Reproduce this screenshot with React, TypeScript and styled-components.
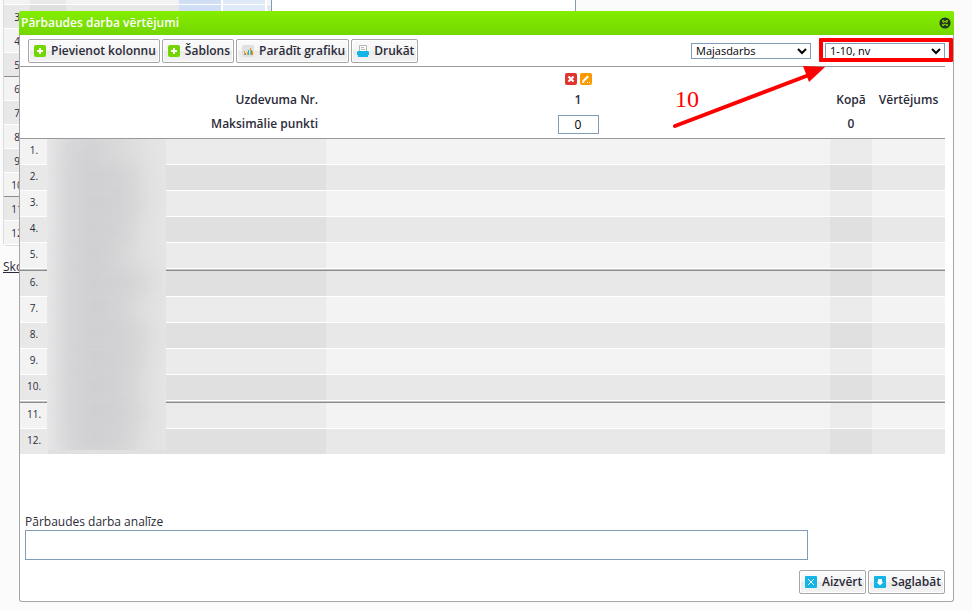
import React from "react";
import styled, { createGlobalStyle, css } from "styled-components";

const GlobalStyle = createGlobalStyle`
  *, *::before, *::after { box-sizing: border-box; }
  body {
    margin: 0;
    background: #fbfbfb;
    color: #2b2b3a;
    font: 12px/16px "Trebuchet MS", "Open Sans", "Noto Sans", sans-serif;
  }
  button, input, select, textarea { font: inherit; color: inherit; }
`;

const Page = styled.div`
  position: relative;
  min-height: 100vh;
  overflow: hidden;
`;

/* Journal page behind the dialog */

const Journal = styled.div`
  display: flex;
  align-items: flex-start;
`;

const JournalTable = styled.table`
  width: 269px;
  margin-left: 3px;
  table-layout: fixed;
  border-collapse: separate;
  border-spacing: 0;
  border: 1px solid #dcdcdc;
  border-top: 0;
  border-radius: 0 0 4px 4px;
`;

const JournalRow = styled.tr<{ $dark: boolean; $ruled: boolean }>`
  background: ${(p) => (p.$dark ? "#e8e8e8" : "#f3f3f3")};
  td {
    height: 24px;
    border-bottom: 1px solid ${(p) => (p.$ruled ? "#8c8c8c" : "#ffffff")};
  }
`;

const JournalCell = styled.td<{ $tone?: string }>`
  padding: 0;
  font-size: 10px;
  text-align: center;
  background: ${(p) => p.$tone ?? "transparent"};
`;

const BlueCell = styled(JournalCell)`
  border-right: 2px solid #ffffff;
`;

const TopRow = styled(JournalRow)`
  td { height: 5px; }
`;

const JournalPane = styled.div`
  flex: 0 0 305px;
  height: 240px;
  margin-left: -1px;
  background: #ffffff;
  border: solid #7f9db9;
  border-width: 0 1px;
`;

const JournalLink = styled.a`
  display: inline-block;
  margin: 13px 0 0 3px;
  color: #2b2b3a;
`;

/* Dialog */

const Dialog = styled.section`
  position: absolute;
  top: 11px;
  left: 19px;
  right: 18px;
  background: #ffffff;
  border: solid #a6a6a6;
  border-width: 0 1px 1px;
  border-radius: 3px;
`;

const TitleBar = styled.header`
  display: flex;
  align-items: center;
  justify-content: space-between;
  height: 24px;
  margin: 0 -1px;
  padding: 0 3px 0 2px;
  background: linear-gradient(#84ee00, #74d600);
  border-radius: 2px 2px 0 0;
`;

const Title = styled.h1`
  margin: 0;
  color: #ffffff;
  font-size: 12px;
  font-weight: 600;
`;

const CloseButton = styled.button`
  display: flex;
  padding: 0;
  border: 0;
  background: none;
`;

const Content = styled.div`
  margin-right: 8px;
`;

const Toolbar = styled.div`
  display: flex;
  align-items: center;
  gap: 2px;
  height: 32px;
  padding-left: 8px;
  border-bottom: 1px solid #999999;
`;

const Button = styled.button`
  display: flex;
  align-items: center;
  gap: 5px;
  height: 24px;
  padding: 0 3px 0 5px;
  border: 1px solid #a6a6a6;
  border-radius: 2px;
  background: linear-gradient(#fafafa 0, #f6f6f6 48%, #e9e9e9 50%, #f4f4f4 100%);
  box-shadow: inset 0 0 0 1px #ffffff;
  font-weight: 600;
  white-space: nowrap;
`;

const Filters = styled.div`
  display: flex;
  gap: 14px;
  margin-left: auto;
`;

const SelectBox = styled.div`
  position: relative;
  display: flex;
  width: 120px;
  svg {
    position: absolute;
    top: 5px;
    right: 4px;
    pointer-events: none;
  }
`;

const Select = styled.select`
  appearance: none;
  width: 100%;
  height: 16px;
  padding: 0 4px;
  border: 1px solid #7f9db9;
  border-radius: 0;
  background: #ffffff;
  color: #000000;
  font-size: 11px;
  line-height: 14px;
`;

const Highlight = styled.div`
  position: absolute;
  top: -5px;
  left: -6px;
  right: -8px;
  height: 24px;
  border: 4px solid #fe0000;
  border-radius: 1px;
  pointer-events: none;
`;

const Annotation = styled.div`
  position: absolute;
  top: 55px;
  right: 128px;
  width: 154px;
  height: 64px;
  color: #fe0000;
  font: 24px/28px "Liberation Serif", serif;
  pointer-events: none;
  svg { position: absolute; inset: 0; }
  span { position: absolute; top: 19px; left: 4px; }
`;

const Grid = styled.div`
  position: relative;
`;

const Scores = styled.table`
  width: 100%;
  table-layout: fixed;
  border-collapse: separate;
  border-spacing: 0;
  th, td { padding: 0; }
`;

const HeadRow = styled.tr<{ $kind: "actions" | "titles" | "points" }>`
  && > * {
    height: ${(p) => ({ actions: 21, titles: 24, points: 26 })[p.$kind]}px;
    padding-top: ${(p) => (p.$kind === "actions" ? 3 : 0)}px;
    padding-bottom: ${(p) => (p.$kind === "points" ? 2 : 0)}px;
  }
`;

const HeadCell = styled.th<{ $right?: boolean }>`
  font-weight: 600;
  text-align: ${(p) => (p.$right ? "right" : "center")};
  white-space: nowrap;
  && { padding-right: ${(p) => (p.$right ? "8px" : "0")}; }
`;

const ColumnActions = styled.div`
  display: flex;
  justify-content: center;
  gap: 3px;
`;

const IconButton = styled.button`
  display: flex;
  padding: 0;
  border: 0;
  background: none;
`;

const PointsInput = styled.input`
  display: block;
  width: 41px;
  height: 19px;
  margin: 0 auto;
  padding: 0;
  border: 1px solid #7f9db9;
  background: #ffffff;
  color: #000000;
  font-size: 12px;
  font-weight: 400;
  text-align: center;
`;

const Body = styled.tbody`
  tr:first-child td, tr:first-child th { border-top: 1px solid #999999; height: 27px; }
`;

const ScoreRow = styled.tr<{ $dark: boolean; $rule: "none" | "thin" | "group" }>`
  background: ${(p) => (p.$dark ? "#e8e8e8" : "#f3f3f3")};
  td, th {
    height: ${(p) => (p.$rule === "group" ? 28 : p.$rule === "thin" ? 26 : 25)}px;
    border-bottom: ${(p) => (p.$rule === "none" ? "0" : "1px solid #ffffff")};
    ${(p) =>
      p.$rule === "group" &&
      css`
        border-bottom: 1px solid #8c8c8c;
        box-shadow: inset 0 -1px #c4c4c4, inset 0 -2px #ffffff;
      `}
  }
`;

const NumberCell = styled.th`
  font-size: 10px;
  line-height: 14px;
  font-weight: 400;
  text-align: center;
  vertical-align: top;
  && { padding-top: 4px; }
`;

const ShadedCell = styled.td`
  background: rgba(0, 0, 0, 0.03);
`;

const NamesMask = styled.div`
  position: absolute;
  left: 27px;
  bottom: 4px;
  width: 119px;
  height: 311px;
  overflow: hidden;
  background: linear-gradient(90deg, #e8e8e9 0, #dddddf 18%, #d7d7d9 40%, #dbdbdc 62%, #e3e3e3 86%, #e5e5e5 100%);
`;

const Smudge = styled.i<{ $w: number }>`
  display: block;
  width: ${(p) => p.$w}px;
  height: 26px;
  margin-left: 16px;
  background: #c9c9cc;
  opacity: 0.5;
  filter: blur(12px);
`;

const Analysis = styled.div`
  display: flex;
  flex-direction: column;
  margin: 60px 137px 0 5px;
`;

const AnalysisBox = styled.textarea`
  height: 30px;
  padding: 4px;
  border: 1px solid #7f9db9;
  border-radius: 0;
  background: #ffffff;
  resize: none;
`;

const Footer = styled.footer`
  display: flex;
  justify-content: flex-end;
  gap: 2px;
  padding: 10px 0 7px;
`;

/* Icons */

const PlusIcon = () => (
  <svg width="12" height="12" viewBox="0 0 12 12" aria-hidden="true">
    <rect width="12" height="12" rx="2" fill="#74d600" />
    <path d="M5 3h2v2h2v2H7v2H5V7H3V5h2z" fill="#fff" />
  </svg>
);

const ChartIcon = () => (
  <svg width="12" height="12" viewBox="0 0 12 12" aria-hidden="true">
    <rect width="12" height="12" rx="2" fill="#e0e0e0" />
    <path d="M2 6h1v4H2zM5 7h1v3H5zM8 3h1v7H8zM10 6h1v4h-1z" fill="#fb9a00" />
    <path d="M3 8h1v2H3zM6 5h1v5H6zM9 5h1v5H9z" fill="#12b5e5" />
  </svg>
);

const PrinterIcon = () => (
  <svg width="12" height="12" viewBox="0 0 12 12" aria-hidden="true">
    <path d="M2.5 6V.5h7V6" fill="#fff" stroke="#b4b4b4" />
    <path d="M4 2.5h3M4 4.5h4" stroke="#b4b4b4" />
    <path d="M1 6h10l1 1v3h-1v2H1v-2H0V7z" fill="#12b5e5" />
  </svg>
);

const DeleteIcon = () => (
  <svg width="12" height="12" viewBox="0 0 12 12" aria-hidden="true">
    <rect width="12" height="12" rx="2" fill="#e0342f" />
    <path d="M3.5 3.5l5 5M8.5 3.5l-5 5" stroke="#fff" strokeWidth="2.2" />
  </svg>
);

const EditIcon = () => (
  <svg width="12" height="12" viewBox="0 0 12 12" aria-hidden="true">
    <rect width="12" height="12" rx="2" fill="#fb9a00" />
    <path d="M3.2 8.2l5-5" stroke="#fff" strokeWidth="2.2" />
    <path d="M2 10l.5-2.5 2 2zM7 9h1v1H7zM9 9h1v1H9z" fill="#fff" />
  </svg>
);

const CancelIcon = () => (
  <svg width="12" height="12" viewBox="0 0 12 12" aria-hidden="true">
    <rect width="12" height="12" rx="1" fill="#12b5e5" />
    <path d="M3 3l6 6M9 3L3 9" stroke="#fff" />
  </svg>
);

const SaveIcon = () => (
  <svg width="12" height="12" viewBox="0 0 12 12" aria-hidden="true">
    <rect width="12" height="12" rx="1" fill="#12b5e5" />
    <path d="M4 3h4v3h1.5L6 9.5 2.5 6H4z" fill="#fff" />
  </svg>
);

const CloseIcon = () => (
  <svg width="12" height="12" viewBox="0 0 12 12" aria-hidden="true">
    <circle cx="6" cy="6" r="5.6" fill="#24371f" />
    <path d="M4 4l4 4M8 4L4 8" stroke="#84e400" strokeWidth="2" strokeLinecap="round" />
    <path d="M4.5 4.5l3 3M7.5 4.5l-3 3" stroke="#24371f" strokeWidth=".8" />
  </svg>
);

const Chevron = () => (
  <svg width="10" height="7" viewBox="0 0 10 7" aria-hidden="true">
    <path d="M1 1l4 4 4-4" fill="none" stroke="#000" strokeWidth="2" />
  </svg>
);

const journalNumbers = [3, 4, 5, 6, 7, 8, 9, 10, 11, 12];
const pupils = [1, 2, 3, 4, 5, 6, 7, 8, 9, 10, 11, 12];
const smudgeWidths = [34, 76, 78, 70, 54, 92, 64, 88, 82, 74, 82, 72];

const rowRule = (n: number) => (n === 12 ? "none" : n % 5 === 0 ? "group" : "thin");

function JournalBackdrop() {
  return (
    <>
      <Journal>
        <JournalTable>
          <colgroup>
            <col style={{ width: 26 }} />
            <col style={{ width: 36 }} />
            <col />
            <col style={{ width: 44 }} />
            <col style={{ width: 44 }} />
            <col style={{ width: 4 }} />
          </colgroup>
          <tbody>
            <TopRow $dark={false} $ruled={false}>
              <JournalCell />
              <JournalCell $tone="#e8e8e8" />
              <JournalCell />
              <BlueCell $tone="#d0dff6" />
              <BlueCell $tone="#dfe9f8" />
              <JournalCell />
            </TopRow>
            {journalNumbers.map((n) => (
              <JournalRow key={n} $dark={n % 2 === 1} $ruled={n % 5 === 0}>
                <JournalCell>{n}</JournalCell>
                <JournalCell $tone="#dedede" />
                <JournalCell />
                <BlueCell $tone="#d0dff6" />
                <BlueCell $tone="#dfe9f8" />
                <JournalCell />
              </JournalRow>
            ))}
          </tbody>
        </JournalTable>
        <JournalPane />
      </Journal>
      <JournalLink href="#sko">Sko</JournalLink>
    </>
  );
}

export default function App() {
  return (
    <>
      <GlobalStyle />
      <Page>
        <JournalBackdrop />
        <Dialog role="dialog" aria-labelledby="dialog-title">
          <TitleBar>
            <Title id="dialog-title">Pārbaudes darba vērtējumi</Title>
            <CloseButton type="button" aria-label="Aizvērt logu">
              <CloseIcon />
            </CloseButton>
          </TitleBar>
          <Content>
            <Toolbar>
              <Button type="button"><PlusIcon />Pievienot kolonnu</Button>
              <Button type="button"><PlusIcon />Šablons</Button>
              <Button type="button"><ChartIcon />Parādīt grafiku</Button>
              <Button type="button"><PrinterIcon />Drukāt</Button>
              <Filters>
                <SelectBox>
                  <Select aria-label="Darba veids" defaultValue="Majasdarbs">
                    <option>Majasdarbs</option>
                  </Select>
                  <Chevron />
                </SelectBox>
                <SelectBox>
                  <Select aria-label="Vērtējuma skala" defaultValue="1-10, nv">
                    <option>1-10, nv</option>
                  </Select>
                  <Chevron />
                  <Highlight />
                </SelectBox>
              </Filters>
            </Toolbar>
            <Grid>
              <Scores>
                <colgroup>
                  <col style={{ width: 28 }} />
                  <col style={{ width: 278 }} />
                  <col />
                  <col style={{ width: 42 }} />
                  <col style={{ width: 73 }} />
                </colgroup>
                <thead>
                  <HeadRow $kind="actions">
                    <td colSpan={2} />
                    <td>
                      <ColumnActions>
                        <IconButton type="button" aria-label="Dzēst kolonnu"><DeleteIcon /></IconButton>
                        <IconButton type="button" aria-label="Labot kolonnu"><EditIcon /></IconButton>
                      </ColumnActions>
                    </td>
                    <td colSpan={2} />
                  </HeadRow>
                  <HeadRow $kind="titles">
                    <HeadCell colSpan={2} $right>Uzdevuma Nr.</HeadCell>
                    <HeadCell>1</HeadCell>
                    <HeadCell>Kopā</HeadCell>
                    <HeadCell>Vērtējums</HeadCell>
                  </HeadRow>
                  <HeadRow $kind="points">
                    <HeadCell colSpan={2} $right>
                      <label htmlFor="max-points">Maksimālie punkti</label>
                    </HeadCell>
                    <HeadCell>
                      <PointsInput id="max-points" defaultValue="0" />
                    </HeadCell>
                    <HeadCell>0</HeadCell>
                    <td />
                  </HeadRow>
                </thead>
                <Body>
                  {pupils.map((n) => (
                    <ScoreRow key={n} $dark={n % 2 === 0} $rule={rowRule(n)}>
                      <NumberCell scope="row">{n}.</NumberCell>
                      <ShadedCell />
                      <td />
                      <ShadedCell />
                      <td />
                    </ScoreRow>
                  ))}
                </Body>
              </Scores>
              <NamesMask aria-hidden="true">
                {smudgeWidths.map((w, i) => (
                  <Smudge key={i} $w={w} />
                ))}
              </NamesMask>
            </Grid>
            <Analysis>
              <label htmlFor="analysis">Pārbaudes darba analīze</label>
              <AnalysisBox id="analysis" />
            </Analysis>
            <Footer>
              <Button type="button"><CancelIcon />Aizvērt</Button>
              <Button type="button"><SaveIcon />Saglabāt</Button>
            </Footer>
          </Content>
          <Annotation>
            <svg width="154" height="64" viewBox="0 0 154 64" aria-hidden="true">
              <path d="M4 60L138 9" stroke="#fe0000" strokeWidth="4" strokeLinecap="round" />
              <path d="M154 1L132 0L138 16z" fill="#fe0000" />
            </svg>
            <span>10</span>
          </Annotation>
        </Dialog>
      </Page>
    </>
  );
}
